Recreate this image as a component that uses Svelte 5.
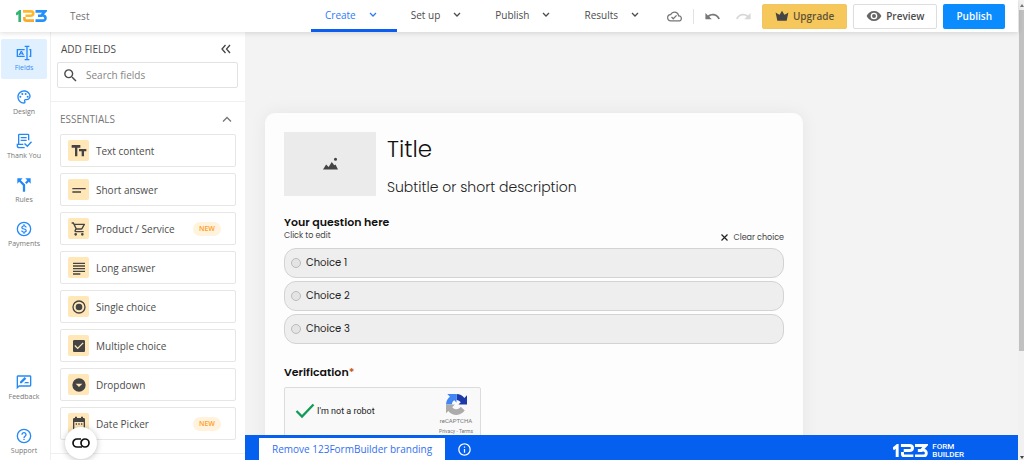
<script>
  const paths = {
    search: 'M15.5 14h-.79l-.28-.27A6.471 6.471 0 0 0 16 9.5 6.5 6.5 0 1 0 9.5 16c1.61 0 3.09-.59 4.23-1.57l.27.28v.79l5 4.99L20.49 19zm-6 0C7.01 14 5 11.99 5 9.5S7.01 5 9.5 5 14 7.01 14 9.5 11.99 14 9.5 14z',
    fields: 'M1 6h12v2H3v8h10v2H1zM20 6h3v12h-3v-2h1V8h-1zM13 1h7v2h-2.500v18H20v2h-7v-2h2.500V3H13zM7 9h2l3 6h-2l-.5-1.200h-3L6 15H4zm.2 3.500h1.600L8 10.800z',
    design: 'M12 22C6.49 22 2 17.51 2 12S6.49 2 12 2s10 4.04 10 9c0 3.31-2.69 6-6 6h-1.77c-.28 0-.5.22-.5.5 0 .12.05.23.13.33.41.47.64 1.06.64 1.67A2.5 2.5 0 0 1 12 22zm0-18c-4.41 0-8 3.59-8 8s3.59 8 8 8c.28 0 .5-.22.5-.5a.54.54 0 0 0-.14-.35c-.41-.46-.63-1.05-.63-1.65a2.5 2.500 0 0 1 2.5-2.5H16c2.21 0 4-1.79 4-4 0-3.86-3.59-7-8-7zM5 11.500a1.500 1.500 0 1 0 3 0a1.500 1.500 0 1 0-3 0zM8 7.500a1.500 1.500 0 1 0 3 0a1.500 1.500 0 1 0-3 0zM13 7.500a1.500 1.500 0 1 0 3 0a1.500 1.500 0 1 0-3 0zM16 11.500a1.500 1.500 0 1 0 3 0a1.500 1.500 0 1 0-3 0z',
    thanks: 'M5 1h13a2 2 0 0 1 2 2v8h-2V3H5v13H3V3a2 2 0 0 1 2-2zM7 6h9v2H7zM7 10h9v2H7zM1 16h10v2H3v1a2 2 0 0 0 2 2h8v2H5a4 4 0 0 1-4-4zM12 16.500l1.500-1.500 3.500 3.500 5.500-6 1.500 1.500-7 7.500z',
    rules: 'M14 2l2.800 2.800-3.300 3.300 2.400 2.400 3.300-3.300L22 10V2zm-4 0H2v8l2.800-2.800 5.500 5.500V22h3.400V11.300l-6.500-6.500z',
    payments: 'M12 1a11 11 0 1 0 0 22 11 11 0 0 0 0-22zm0 2a9 9 0 1 1 0 18 9 9 0 0 1 0-18zM11 5h2v1.600c1.800.3 3 1.500 3.100 3.100h-2c-.1-.9-.8-1.500-2.100-1.500-1.300 0-2.100.6-2.100 1.400 0 .8.6 1.200 2.400 1.600 2.500.6 3.900 1.400 3.900 3.300 0 1.600-1.200 2.600-3.200 2.900V19h-2v-1.600c-2-.3-3.200-1.500-3.300-3.200h2c.1 1 .9 1.600 2.300 1.600 1.500 0 2.200-.6 2.200-1.300 0-.8-.5-1.200-2.400-1.600-2.200-.5-3.900-1.300-3.900-3.200 0-1.600 1.200-2.700 3.100-3.100z',
    feedback: 'M21 2H3c-1.100 0-2 .9-2 2v19l4-4h16c1.100 0 2-.9 2-2V4c0-1.100-.9-2-2-2zm0 15H4.200L3 18.200V4h18zM6 14v-2.500L12.900 4.600l2.500 2.500L8.500 14zm6 0l2-2h5v2z',
    support: 'M11 18h2v-2h-2v2zm1-17a11 11 0 1 0 0 22 11 11 0 0 0 0-22zm0 20a9 9 0 1 1 0-18 9 9 0 0 1 0 18zm0-15c-2.210 0-4 1.790-4 4h2c0-1.100.9-2 2-2s2 .9 2 2c0 2-3 1.750-3 5h2c0-2.250 3-2.500 3-5 0-2.210-1.790-4-4-4z',
    info: 'M11 7h2v2h-2zm0 4h2v6h-2zm1-9C6.480 2 2 6.480 2 12s4.480 10 10 10 10-4.480 10-10S17.520 2 12 2zm0 18c-4.410 0-8-3.590-8-8s3.590-8 8-8 8 3.590 8 8-3.590 8-8 8z',
    text: 'M1 3h13v4H9.500v13H6V7H1zM12 9h11v3.500h-3.500V20H16v-7.500h-4z',
    short: 'M2 9h20v2H2zM2 14h13v2H2z',
    cart: 'M15.55 13c.75 0 1.410-.41 1.750-1.030l3.580-6.490A.996.996 0 0 0 20.010 4H5.210l-.94-2H1v2h2l3.600 7.590-1.350 2.440C4.520 15.370 5.480 17 7 17h12v-2H7l1.100-2h7.450zM6.160 6h12.150l-2.760 5H8.530zM7 18a2 2 0 1 0 0 4 2 2 0 0 0 0-4zm10 0a2 2 0 1 0 0 4 2 2 0 0 0 0-4z',
    long: 'M3 4h18v2H3zM3 8h18v2H3zM3 12h18v2H3zM3 16h18v2H3zM3 20h11v2H3z',
    radio: 'M12 7a5 5 0 1 0 0 10 5 5 0 0 0 0-10zm0-5a10 10 0 1 0 0 20 10 10 0 0 0 0-20zm0 18a8 8 0 1 1 0-16 8 8 0 0 1 0 16z',
    check: 'M19 3H5c-1.110 0-2 .9-2 2v14c0 1.100.89 2 2 2h14c1.110 0 2-.9 2-2V5c0-1.100-.89-2-2-2zm-9 14l-5-5 1.410-1.410L10 14.170l7.590-7.590L19 8z',
    dropdown: 'M12 2a10 10 0 1 0 0 20 10 10 0 0 0 0-20zM7 10h10l-5 5z',
    date: 'M19 3h-1V1h-3v2H9V1H6v2H5a2 2 0 0 0-2 2v15a2 2 0 0 0 2 2h14a2 2 0 0 0 2-2V5a2 2 0 0 0-2-2zm0 17H5V9h14zM7 11h2v2H7zM11 11h2v2h-2zM15 11h2v2h-2z',
    eye: 'M12 4.500C7 4.500 2.730 7.610 1 12c1.730 4.390 6 7.500 11 7.500s9.270-3.110 11-7.500c-1.730-4.390-6-7.500-11-7.500zM12 17a5 5 0 1 1 0-10 5 5 0 0 1 0 10zm0-8a3 3 0 1 0 0 6 3 3 0 0 0 0-6z',
    crown: 'M12 3l4 7 3-1.500L23 6l-3 14H4L1 6l4 2.500L8 10z',
    undo: 'M12.500 8c-2.650 0-5.050.99-6.900 2.600L2 7v9h9l-3.620-3.620c1.390-1.160 3.160-1.880 5.120-1.880 3.540 0 6.550 2.310 7.600 5.500l2.370-.78C21.080 11.030 17.150 8 12.500 8z',
    redo: 'M11.500 8c2.650 0 5.050.99 6.900 2.600L22 7v9h-9l3.620-3.620c-1.390-1.160-3.160-1.880-5.120-1.880-3.540 0-6.550 2.310-7.600 5.500l-2.370-.78C2.920 11.030 6.850 8 11.500 8z',
    cloud: 'M19.350 10.040A7.490 7.490 0 0 0 12 4C9.110 4 6.600 5.640 5.350 8.040A5.994 5.994 0 0 0 0 14c0 3.310 2.690 6 6 6h13c2.760 0 5-2.240 5-5 0-2.640-2.050-4.780-4.650-4.960zM19 18H6c-2.210 0-4-1.790-4-4 0-2.050 1.530-3.760 3.560-3.970l1.070-.11.5-.95A5.469 5.469 0 0 1 12 6c2.620 0 4.880 1.860 5.390 4.430l.3 1.500 1.530.11A2.980 2.980 0 0 1 22 15c0 1.650-1.350 3-3 3zm-9-3.820l-2.090-2.090L6.500 13.500 10 17l6.010-6.010-1.410-1.410z',
    picture: 'M0 20l5-8 4 4 5-8 4 5 2-1 4 8zM20 1a2.500 2.500 0 1 1 0 5 2.500 2.500 0 0 1 0-5z'
  };

  const tabs = ['Create', 'Set up', 'Publish', 'Results'];
  const railTop = [
    ['fields', 'Fields'],
    ['design', 'Design'],
    ['thanks', 'Thank You'],
    ['rules', 'Rules'],
    ['payments', 'Payments']
  ];
  const railBottom = [
    ['feedback', 'Feedback'],
    ['support', 'Support']
  ];
  const essentials = [
    { icon: 'text', label: 'Text content' },
    { icon: 'short', label: 'Short answer' },
    { icon: 'cart', label: 'Product / Service', isNew: true },
    { icon: 'long', label: 'Long answer' },
    { icon: 'radio', label: 'Single choice' },
    { icon: 'check', label: 'Multiple choice' },
    { icon: 'dropdown', label: 'Dropdown' },
    { icon: 'date', label: 'Date Picker', isNew: true }
  ];
  const choices = ['Choice 1', 'Choice 2', 'Choice 3'];

  let activeTab = $state('Create');
  let activeTool = $state('Fields');
  let picked = $state('');
</script>

{#snippet icon(name, size)}
  <svg class="icon" width={size} height={size} viewBox="0 0 24 24" aria-hidden="true"><path fill-rule="evenodd" d={paths[name]} /></svg>
{/snippet}

{#snippet mark(a, b, c, d, w)}
  <svg width={w} viewBox="0 0 31 12" fill="none" stroke-width="2.600" aria-label="123" role="img">
    <path stroke={a} d="M0 4.500L3.700 1.500V12" />
    <path stroke={b} d="M7 1.400H14.500Q17.300 1.400 17.300 3.500T14.500 5.700H9.500" />
    <path stroke={c} d="M8.400 7V9Q8.400 10.600 10.500 10.600H18" />
    <path stroke={d} d="M19.500 1.400H29L25.500 5.200Q29.500 5.300 29.500 8T26.500 10.600H19.500M22 5.800H26" />
  </svg>
{/snippet}

<div class="app">
  <div class="shell">
    <header>
      <div class="brand">{@render mark('#2fb574', '#fdb92e', '#fba928', '#2490fc', 31)}</div>
      <span class="name">Test</span>
      <nav class="tabs">
        {#each tabs as tab}
          <button class="tab" class:active={activeTab === tab} onclick={() => (activeTab = tab)}>
            {tab}
            <svg width="8" height="6" viewBox="0 0 8 6" fill="none" stroke="currentColor" stroke-width="1.300"><path d="M1 1l3 3 3-3" /></svg>
          </button>
        {/each}
      </nav>
      <div class="actions">
        <span class="cloud">{@render icon('cloud', 15)}</span>
        <button class="plain" aria-label="Undo">{@render icon('undo', 17)}</button>
        <button class="plain faded" aria-label="Redo">{@render icon('redo', 17)}</button>
        <button class="btn upgrade">{@render icon('crown', 14)}Upgrade</button>
        <button class="btn preview">{@render icon('eye', 16)}Preview</button>
        <button class="btn publish">Publish</button>
      </div>
    </header>

    <div class="body">
      <nav class="rail">
        {#each railTop as [glyph, label]}
          <button class="tool" class:active={activeTool === label} onclick={() => (activeTool = label)}>
            {@render icon(glyph, 16)}{label}
          </button>
        {/each}
        <div class="low">
          {#each railBottom as [glyph, label]}
            <button class="tool">{@render icon(glyph, 16)}{label}</button>
          {/each}
        </div>
      </nav>

      <aside>
        <div class="top">
          <div class="heading">
            <h2>ADD FIELDS</h2>
            <button class="plain" aria-label="Collapse panel">
              <svg width="10" height="10" viewBox="0 0 10 10" fill="none" stroke="#444" stroke-width="1.300"><path d="M4.500 1L1 5l3.500 4M9 1L5.500 5 9 9" /></svg>
            </button>
          </div>
          <label class="search">
            {@render icon('search', 17)}
            <input type="text" placeholder="Search fields" aria-label="Search fields" />
          </label>
        </div>
        <section>
          <button class="group">
            ESSENTIALS
            <svg width="10" height="7" viewBox="0 0 10 7" fill="none" stroke="currentColor" stroke-width="1.300"><path d="M1 5.500l4-4 4 4" /></svg>
          </button>
          <ul>
            {#each essentials as item}
              <li>
                <button class="field">
                  <span class="tile">{@render icon(item.icon, 16)}</span>
                  {item.label}
                  {#if item.isNew}<span class="new">NEW</span>{/if}
                </button>
              </li>
            {/each}
          </ul>
        </section>
      </aside>

      <main>
        <div class="canvas">
          <form>
            <div class="intro">
              <div class="picture">{@render icon('picture', 15)}</div>
              <div>
                <h1>Title</h1>
                <p class="subtitle">Subtitle or short description</p>
              </div>
            </div>

            <fieldset>
              <legend>Your question here</legend>
              <div class="hint">
                <span>Click to edit</span>
                <button type="button" class="clear" onclick={() => (picked = '')}>
                  <svg width="7" height="7" viewBox="0 0 7 7" stroke="#222" stroke-width="1.200"><path d="M.5.5l6 6M6.500.5l-6 6" /></svg>
                  Clear choice
                </button>
              </div>
              {#each choices as choice}
                <label class="choice">
                  <input type="radio" name="choice" value={choice} bind:group={picked} />
                  {choice}
                </label>
              {/each}
            </fieldset>

            <h3>Verification<span>*</span></h3>
            <div class="captcha">
              <svg class="tick" width="20" height="16" viewBox="0 0 20 16" fill="none" stroke="#0f9d58" stroke-width="2.300"><path d="M1.500 8l5.500 5.500L18.500 1.500" /></svg>
              <span class="human">I'm not a robot</span>
              <div class="badge">
                <svg width="21" height="21" viewBox="0 0 64 64">
                  <path fill="#1c3aa9" d="M64 32V4l-8 8A31 31 0 0 0 32 0v18c6 0 10 3 13 7l-7 7z" />
                  <path fill="#4285f4" d="M32 0H4l8 8A31 31 0 0 0 0 32h18c0-6 3-10 7-13l7 7z" />
                  <path fill="#ababab" d="M0 32v27l7-7a31 31 0 0 0 50-2L45 39c-5 9-19 10-26 1l8-8z" />
                </svg>
                <span class="re">reCAPTCHA</span>
                <span class="legal"><a href="#privacy">Privacy</a> - <a href="#terms">Terms</a></span>
              </div>
            </div>
          </form>
        </div>

        <footer>
          <button class="remove">Remove 123FormBuilder branding</button>
          <button class="plain" aria-label="About branding">{@render icon('info', 15)}</button>
          <div class="sign">
            {@render mark('#fff', '#fff', '#fff', '#fff', 35)}
            <span>FORM<br />BUILDER</span>
          </div>
        </footer>
      </main>
    </div>
  </div>

  <div class="scroll">
    <i class="arrow up"></i>
    <i class="thumb"></i>
    <i class="arrow down"></i>
  </div>

  <button class="bubble" aria-label="Assistant">
    <svg width="18" height="10" viewBox="0 0 18 10" fill="none" stroke="#111" stroke-width="1.700"><path d="M9 1H5a4 4 0 0 0 0 8h5" /><rect x="9" y="1" width="8" height="8" rx="4" /></svg>
  </button>
</div>

<style>
  :global(body) {
    margin: 0;
  }
  .app {
    display: flex;
    height: 100vh;
    overflow: hidden;
    font: 10px/14px 'Open Sans', 'Noto Sans', sans-serif;
    color: #4c4c4c;
    background: #f3f3f3;
  }
  .app :global(*) {
    box-sizing: border-box;
  }
  svg {
    display: block;
    flex: none;
  }
  .icon {
    fill: currentColor;
  }
  button {
    font: inherit;
    color: inherit;
    border: 0;
    background: none;
    padding: 0;
    cursor: pointer;
  }
  .shell {
    flex: 1;
    min-width: 0;
    display: flex;
    flex-direction: column;
  }

  header {
    position: relative;
    z-index: 1;
    display: flex;
    align-items: center;
    height: 32px;
    flex: none;
    background: #fff;
    box-shadow: 0 1px 5px rgba(0, 0, 0, 0.14);
  }
  .brand {
    width: 70px;
    padding-left: 16px;
  }
  .name {
    width: 241px;
    font-size: 10px;
    font-weight: 500;
    color: #707070;
  }
  .tabs {
    display: flex;
    height: 32px;
  }
  .tab {
    display: flex;
    align-items: center;
    gap: 13px;
    padding: 0 20px 0 14px;
    border-bottom: 3px solid transparent;
    font-weight: 500;
  }
  .tab.active {
    color: #2b7cf7;
    border-color: #0b5cf0;
  }
  .actions {
    display: flex;
    align-items: center;
    margin-left: auto;
    padding-right: 13px;
  }
  .cloud {
    padding-right: 11px;
    border-right: 1px solid #e2e2e2;
    color: #777;
  }
  .plain {
    color: #777;
  }
  .actions .plain {
    margin-left: 10px;
  }
  .actions .faded {
    margin: 0 10px 0 14px;
    color: #d8d8d8;
  }
  .btn {
    display: flex;
    align-items: center;
    justify-content: center;
    gap: 4px;
    height: 25px;
    padding: 0 12px;
    border: 1px solid transparent;
    border-radius: 2px;
    font-weight: 600;
  }
  .btn + .btn {
    margin-left: 6px;
  }
  .upgrade {
    background: #f6c75a;
    border-color: #f0c562;
    color: #5e5238;
  }
  .upgrade .icon {
    color: #444;
  }
  .preview {
    background: #fff;
    border-color: #ddd;
  }
  .preview .icon {
    color: #666;
  }
  .publish {
    background: #0a8cff;
    color: #fff;
  }

  .body {
    flex: 1;
    min-height: 0;
    display: flex;
  }
  .rail {
    width: 51px;
    flex: none;
    display: flex;
    flex-direction: column;
    gap: 4px;
    padding: 7px 3px 0 1px;
    background: #fff;
    border-right: 1px solid #f0f0f0;
  }
  .tool {
    display: flex;
    flex-direction: column;
    align-items: center;
    justify-content: center;
    gap: 1px;
    height: 40px;
    width: 46px;
    border-radius: 2px;
    font-size: 7px;
    line-height: 12px;
    white-space: nowrap;
    font-weight: 500;
    color: #777;
  }
  .tool .icon {
    color: #2389fa;
  }
  .tool.active {
    background: #e0f0ff;
    color: #3a8df5;
  }
  .low {
    display: flex;
    flex-direction: column;
    gap: 18px;
    margin-top: auto;
  }
  .low .tool {
    height: 36px;
  }

  aside {
    width: 194px;
    flex: none;
    overflow: hidden;
    background: #fff;
  }
  .top {
    padding: 10px 7px 13px 6px;
    border-bottom: 1px solid #f0f0f0;
  }
  .heading {
    display: flex;
    justify-content: space-between;
    padding: 0 7px 6px 4px;
  }
  h2 {
    margin: 0;
    font-size: 10px;
    font-weight: 500;
  }
  .search {
    display: flex;
    align-items: center;
    gap: 7px;
    height: 26px;
    padding-left: 4px;
    border: 1px solid #e2e2e2;
    border-radius: 2px;
  }
  .search input {
    flex: 1;
    min-width: 0;
    border: 0;
    outline: 0;
    padding: 0;
    font: inherit;
    background: none;
  }
  .search input::placeholder {
    color: #858585;
  }
  section {
    border-bottom: 1px solid #f0f0f0;
    padding: 10px 9px 13px;
  }
  .group {
    display: flex;
    justify-content: space-between;
    align-items: center;
    width: 100%;
    padding-right: 4px;
    color: #777;
    font-weight: 500;
  }
  ul {
    display: grid;
    gap: 6px;
    margin: 8px 0 0;
    padding: 0;
    list-style: none;
  }
  .field {
    display: flex;
    align-items: center;
    gap: 7px;
    width: 100%;
    height: 33px;
    padding: 0 14px 0 7px;
    border: 1px solid #e6e6e6;
    border-radius: 2px;
    font-weight: 500;
  }
  .tile {
    display: grid;
    place-items: center;
    width: 21px;
    height: 21px;
    border-radius: 2px;
    background: #ffe7b8;
    color: #444;
  }
  .new {
    margin-left: auto;
    padding: 0 6px;
    border-radius: 7px;
    background: #fff3de;
    color: #ff9c1f;
    font-size: 7px;
    font-weight: 600;
  }

  main {
    flex: 1;
    min-width: 0;
    display: flex;
    flex-direction: column;
    font-family: Poppins, Inter, sans-serif;
    color: #222;
  }
  .canvas {
    flex: 1;
    min-height: 0;
    overflow: hidden;
    padding: 81px 20px 0;
  }
  form {
    max-width: 538px;
    padding: 19px;
    border-radius: 10px 10px 0 0;
    background: #fdfdfd;
    box-shadow: 0 0 18px rgba(0, 0, 0, 0.06);
  }
  .intro {
    display: flex;
    gap: 11px;
  }
  .picture {
    display: grid;
    place-items: center;
    width: 92px;
    height: 64px;
    background: #ebebeb;
    color: #444;
  }
  h1 {
    margin: 0;
    font-size: 23px;
    line-height: 34px;
    font-weight: 300;
    color: #111;
  }
  .subtitle {
    margin: 11px 0 0;
    font-size: 14px;
    line-height: 20px;
    font-weight: 300;
  }
  fieldset {
    display: grid;
    gap: 3px;
    margin: 17px 0 0;
    padding: 0;
    border: 0;
    min-width: 0;
  }
  legend,
  h3 {
    margin: 0;
    padding: 0;
    font-size: 11px;
    line-height: 16px;
    font-weight: 600;
    color: #111;
  }
  .hint {
    display: flex;
    justify-content: space-between;
    height: 15px;
    font-size: 8px;
    line-height: 12px;
    color: #444;
  }
  .clear {
    display: flex;
    align-items: center;
    gap: 5px;
  }
  .choice {
    display: flex;
    align-items: center;
    gap: 5px;
    height: 30px;
    padding-left: 6px;
    border: 1px solid #d3d3d3;
    border-radius: 12px;
    background: #eee;
  }
  .choice input {
    appearance: none;
    width: 10px;
    height: 10px;
    margin: 0;
    border: 1px solid #bbb;
    border-radius: 50%;
    background: #e4e4e4;
  }
  .choice input:checked {
    background: #555;
  }
  h3 {
    margin: 20px 0 7px;
  }
  h3 span {
    color: #d0551c;
  }
  .captcha {
    display: flex;
    align-items: center;
    width: 197px;
    height: 52px;
    padding: 0 7px 0 10px;
    border: 1px solid #dcdcdc;
    border-radius: 2px;
    background: #f9f9f9;
    font-family: Roboto, sans-serif;
  }
  .tick,
  .human {
    margin-bottom: 4px;
  }
  .human {
    margin-left: 2px;
    font-size: 9px;
  }
  .badge {
    display: flex;
    flex-direction: column;
    align-items: center;
    margin: 4px 0 0 auto;
    color: #777;
  }
  .re {
    font-size: 6px;
    line-height: 11px;
  }
  .legal {
    font-size: 5px;
    line-height: 11px;
  }
  .legal a {
    color: inherit;
    text-decoration: none;
  }

  footer {
    position: relative;
    display: flex;
    align-items: center;
    height: 25px;
    flex: none;
    padding: 0 54px 0 14px;
    background: #0560f0;
    font-family: 'Open Sans', 'Noto Sans', sans-serif;
  }
  .remove {
    align-self: flex-end;
    height: 22px;
    padding: 0 13px;
    background: #fff;
    color: #3270f2;
    font-weight: 500;
  }
  footer .plain {
    margin: 4px 0 0 12px;
    color: #fff;
  }
  .sign {
    display: flex;
    align-items: center;
    gap: 4px;
    margin: 6px 0 0 auto;
    color: #fff;
    font: 500 8px/8px Roboto, sans-serif;
  }

  .scroll {
    width: 6px;
    flex: none;
    display: flex;
    flex-direction: column;
    align-items: center;
    padding: 4px 0 1px 1px;
    background: #f1f1f1;
  }
  .thumb {
    width: 5px;
    height: 75%;
    margin-top: 3px;
    background: #c1c1c1;
  }
  .arrow {
    border: 2px solid transparent;
  }
  .up {
    border-top: 0;
    border-bottom: 3px solid #777;
  }
  .down {
    margin-top: auto;
    border-bottom: 0;
    border-top: 3px solid #444;
  }

  .bubble {
    position: absolute;
    z-index: 2;
    left: 65px;
    bottom: 1px;
    display: grid;
    place-items: center;
    width: 32px;
    height: 32px;
    border-radius: 50%;
    background: #fff;
    box-shadow: 0 1px 6px rgba(0, 0, 0, 0.25);
  }
</style>
